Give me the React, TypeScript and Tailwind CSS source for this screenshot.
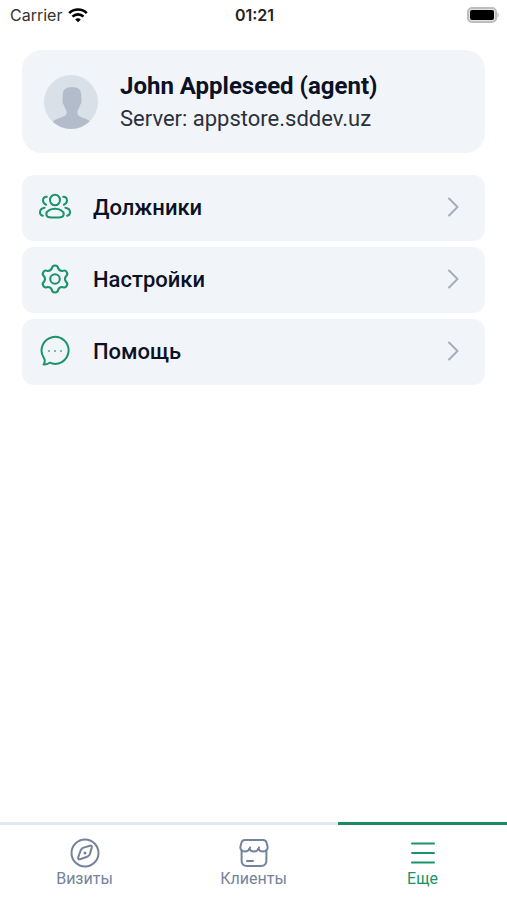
import React, { useState } from 'react';

const strokeProps = {
  fill: 'none',
  stroke: 'currentColor',
  strokeWidth: 2,
  strokeLinecap: 'round' as const,
  strokeLinejoin: 'round' as const,
  'aria-hidden': true,
};

const UsersIcon = () => (
  <svg className="size-8" viewBox="0 0 32 32" {...strokeProps}>
    <ellipse cx="16" cy="9" rx="5" ry="5.3" />
    <path d="M16 17.800c4.800 0 8.700 2.300 8.700 5.200 0 2.200-1.800 3.500-5.200 3.500h-7c-3.400 0-5.200-1.300-5.200-3.500 0-2.900 3.900-5.200 8.700-5.200z" />
    <path d="M7.800 5.800C5.400 5.900 4 7.600 4 9.600c0 1.900 1.200 3.400 3.200 4.100" />
    <path d="M24.200 5.800c2.400.1 3.800 1.800 3.800 3.800 0 1.900-1.200 3.400-3.200 4.100" />
    <path d="M5.600 16.800C2.800 17.300 1 18.900 1 21.200c0 1.900 1 3.200 2.900 3.600" />
    <path d="M26.400 16.800c2.800.5 4.600 2.100 4.600 4.400 0 1.900-1 3.200-2.900 3.600" />
  </svg>
);

const GearIcon = () => (
  <svg className="size-8" viewBox="0.25 0.25 23.5 23.5" {...strokeProps} strokeWidth={1.5}>
    <path d="M9.671 4.136a2.34 2.34 0 0 1 4.659 0 3.300 3.300 0 0 0 3.319 1.915 2.34 2.34 0 0 1 2.33 4.033 3.300 3.300 0 0 0 0 3.831 2.34 2.34 0 0 1-2.33 4.033 3.300 3.300 0 0 0-3.319 1.915 2.34 2.34 0 0 1-4.659 0 3.300 3.300 0 0 0-3.32-1.915 2.34 2.34 0 0 1-2.33-4.033 3.300 3.300 0 0 0 0-3.831A2.34 2.34 0 0 1 6.35 6.051a3.300 3.300 0 0 0 3.319-1.915" />
    <circle cx="12" cy="12" r="3.500" />
  </svg>
);

const ChatIcon = () => (
  <svg className="size-8" viewBox="0 0 32 32" {...strokeProps}>
    <path d="M4.500 22.300A13.500 13.500 0 1 1 10.600 27.700C8.800 29 6.800 29.600 4.600 29.500c.8-1.200 1.200-2.400 1.200-3.700 0-1.200-.5-2.200-1.300-3.500z" />
    <path d="M10 16h.01M16 16h.01M22 16h.01" strokeWidth={2.2} opacity={0.7} />
  </svg>
);

const ChevronIcon = () => (
  <svg className="w-3 h-5 text-[#a5adbc]" viewBox="0 0 12 20" {...strokeProps}>
    <path d="M2 1.500 10.500 10 2 18.500" />
  </svg>
);

const CompassIcon = () => (
  <svg className="size-8" viewBox="0 0 32 32" {...strokeProps}>
    <circle cx="16" cy="16" r="13.500" />
    <path d="M12.500 12.200c.5-.8 1.200-1.300 2.100-1.600l6.300-1.900c1.400-.4 2.300.4 1.900 1.900l-1.900 6.300c-.3.900-.8 1.600-1.600 2.100l-.4.300c-.4.300-.9.500-1.500.7l-6.300 2.200c-1.400.4-2.300-.5-1.900-1.900l2.200-6.300c.2-.7.600-1.300 1.100-1.800z" />
    <path d="M16 16h.01" strokeWidth={3} />
  </svg>
);

const StoreIcon = () => (
  <svg className="size-8" viewBox="0 0 32 32" {...strokeProps}>
    <path d="M3.600 13.500v10c0 3.800 1.700 5.500 5.500 5.500h13.800c3.800 0 5.500-1.700 5.500-5.500v-10" />
    <path d="M12 10.500c-.8 2.600-2.600 4-5 4-3.200 0-5.200-2.400-4.500-5.200l1.100-4C4.100 3.700 5.200 3 6.800 3h18.400c1.600 0 2.700.7 3.200 2.300l1.100 4c.7 2.800-1.300 5.200-4.500 5.200-2.200 0-3.700-.8-4.600-2.500" />
    <path d="M21 10.500c-.8 2.600-2.600 4-4.900 4-2.200 0-3.900-.8-4.800-2.500M9 24h6" />
  </svg>
);

const MenuIcon = () => (
  <svg className="size-8" viewBox="0 0 32 32" {...strokeProps}>
    <path d="M5 6.500h22M5 16h22M5 25.500h22" />
  </svg>
);

const WifiIcon = () => (
  <svg className="w-5 h-4" viewBox="0 0 20 16" fill="none" stroke="currentColor" strokeWidth={2.6} aria-hidden>
    <path d="M1.200 6.200C6 1.300 14 1.300 18.800 6.200" />
    <path d="M4.500 9.600c3-3 8-3 11 0" />
    <path d="M10 15.200 7.200 12.400c1.600-1.400 4-1.400 5.600 0z" fill="currentColor" stroke="none" />
  </svg>
);

const BatteryIcon = () => (
  <svg className="w-8 h-4" viewBox="0 0 32 16" aria-hidden>
    <rect x="1" y="1" width="28" height="14" rx="4" fill="#e4e4e4" stroke="#bdbdbd" strokeWidth="2" />
    <rect x="3" y="3" width="24" height="10" rx="2" fill="#000" />
    <path d="M30.500 5.500c1.500.5 1.500 4.500 0 5z" fill="#b5b5b5" />
  </svg>
);

const Avatar = () => (
  <svg className="size-[54px] rounded-full shrink-0" viewBox="0 0 54 54" role="img" aria-label="John Appleseed">
    <rect width="54" height="54" fill="#d9e0e8" />
    <path
      d="M28 12c6.500 0 9.500 3 9.300 9-.1 1.500 0 3 .2 4.500.3 2-.4 3.500-1.500 4.500-.4 2-1.300 4-2.500 5.500v3c0 2.500 3 3.500 6.500 4.800 3 1 5 2 6 3.700V54H9v-7c1-1.700 3-2.700 6-3.700 3.500-1.300 7.500-2.300 7.500-4.800v-3c-1.200-1.500-2.100-3.500-2.500-5.500-1.100-1-1.800-2.500-1.500-4.500.2-1.500.3-3 .2-4.500-.2-6 2.800-9 9.300-9z"
      fill="#b3bccb"
    />
  </svg>
);

const menuItems = [
  { title: 'Должники', icon: UsersIcon },
  { title: 'Настройки', icon: GearIcon },
  { title: 'Помощь', icon: ChatIcon },
];

const tabs = [
  { id: 'visits', title: 'Визиты', icon: CompassIcon },
  { id: 'clients', title: 'Клиенты', icon: StoreIcon },
  { id: 'more', title: 'Еще', icon: MenuIcon },
];

const App = () => {
  const [activeTab, setActiveTab] = useState('more');

  return (
    <div className="min-h-screen flex flex-col bg-white font-['Roboto',sans-serif] text-[#0c1125]">
      <header className="grid grid-cols-3 items-center h-[30px] pl-[10px] pr-2 font-['Inter',sans-serif] text-base text-[#222]">
        <div className="flex items-center gap-[6px] text-[#333]">
          <span>Carrier</span>
          <span className="text-black"><WifiIcon /></span>
        </div>
        <time className="text-center font-semibold">01:21</time>
        <div className="flex justify-end"><BatteryIcon /></div>
      </header>

      <main className="flex-1 px-[22px] pt-5">
        <section className="flex items-center gap-[22px] h-[103px] pl-[22px] rounded-[20px] bg-[#f1f5f9]">
          <Avatar />
          <div>
            <h1 className="text-2xl leading-[34px] font-bold">John Appleseed (agent)</h1>
            <p className="text-[22px] leading-8 text-[#2b303b]">Server: appstore.sddev.uz</p>
          </div>
        </section>

        <nav className="flex flex-col gap-[6px] mt-[22px]">
          {menuItems.map(({ title, icon: Icon }) => (
            <button
              key={title}
              type="button"
              className="flex items-center w-full h-[66px] pb-[2px] pl-[17px] pr-[26px] rounded-xl bg-[#f1f5f9] text-left"
            >
              <span className="text-[#1a9468]"><Icon /></span>
              <span className="flex-1 ml-[22px] text-[22px] font-medium">{title}</span>
              <ChevronIcon />
            </button>
          ))}
        </nav>
      </main>

      <nav className="grid grid-cols-3">
        {tabs.map(({ id, title, icon: Icon }) => (
          <button
            key={id}
            type="button"
            onClick={() => setActiveTab(id)}
            className={`flex flex-col items-center h-[78px] pt-3 border-t-[3px] text-base ${
              activeTab === id ? 'border-[#1a8a63] text-[#1a9468]' : 'border-[#e2e7f1] text-[#74839c]'
            }`}
          >
            <Icon />
            <span className="leading-5">{title}</span>
          </button>
        ))}
      </nav>
    </div>
  );
};

export default App;
